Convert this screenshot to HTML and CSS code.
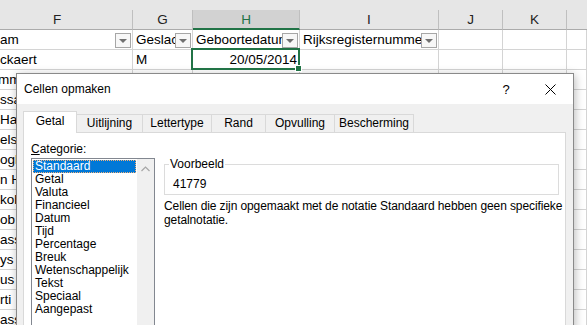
FILE: index.html
```html
<!DOCTYPE html>
<html lang="nl">
<head>
<meta charset="utf-8">
<title>Cellen opmaken</title>
<link rel="stylesheet" href="styles.css">
</head>
<body>
<div class="sheet">
  <div class="topstrip"></div>
  <div class="grid header">
    <div class="hc">F</div>
    <div class="hc">G</div>
    <div class="hc hc-sel">H</div>
    <div class="hc">I</div>
    <div class="hc">J</div>
    <div class="hc">K</div>
    <div class="hc hc-last"></div>
  </div>
  <div class="grid row">
    <div class="c c-first c-filter"><span class="ct">am</span><span class="fb"></span></div>
    <div class="c c-filter"><span class="ct">Geslacht</span><span class="fb"></span></div>
    <div class="c c-filter"><span class="ct">Geboortedatum</span><span class="fb"></span></div>
    <div class="c c-filter"><span class="ct">Rijksregisternummer</span><span class="fb"></span></div>
    <div class="c"></div><div class="c"></div><div class="c"></div>
  </div>
  <div class="grid row">
    <div class="c c-first">ckaert</div>
    <div class="c">M</div>
    <div class="c c-num c-active">20/05/2014<span class="handle"></span></div>
    <div class="c"></div><div class="c"></div><div class="c"></div><div class="c"></div>
  </div>
  <div class="grid row"><div class="c c-first c-cut">mm</div><div class="c"></div><div class="c"></div><div class="c"></div><div class="c"></div><div class="c"></div><div class="c"></div></div>
  <div class="grid row"><div class="c c-first">ssa</div><div class="c"></div><div class="c"></div><div class="c"></div><div class="c"></div><div class="c"></div><div class="c"></div></div>
  <div class="grid row"><div class="c c-first">Har</div><div class="c"></div><div class="c"></div><div class="c"></div><div class="c"></div><div class="c"></div><div class="c"></div></div>
  <div class="grid row"><div class="c c-first">els</div><div class="c"></div><div class="c"></div><div class="c"></div><div class="c"></div><div class="c"></div><div class="c"></div></div>
  <div class="grid row"><div class="c c-first">ogl</div><div class="c"></div><div class="c"></div><div class="c"></div><div class="c"></div><div class="c"></div><div class="c"></div></div>
  <div class="grid row"><div class="c c-first">n H</div><div class="c"></div><div class="c"></div><div class="c"></div><div class="c"></div><div class="c"></div><div class="c"></div></div>
  <div class="grid row"><div class="c c-first">kob</div><div class="c"></div><div class="c"></div><div class="c"></div><div class="c"></div><div class="c"></div><div class="c"></div></div>
  <div class="grid row"><div class="c c-first">ob</div><div class="c"></div><div class="c"></div><div class="c"></div><div class="c"></div><div class="c"></div><div class="c"></div></div>
  <div class="grid row"><div class="c c-first">ass</div><div class="c"></div><div class="c"></div><div class="c"></div><div class="c"></div><div class="c"></div><div class="c"></div></div>
  <div class="grid row"><div class="c c-first">ys</div><div class="c"></div><div class="c"></div><div class="c"></div><div class="c"></div><div class="c"></div><div class="c"></div></div>
  <div class="grid row"><div class="c c-first">us</div><div class="c"></div><div class="c"></div><div class="c"></div><div class="c"></div><div class="c"></div><div class="c"></div></div>
  <div class="grid row"><div class="c c-first">rti</div><div class="c"></div><div class="c"></div><div class="c"></div><div class="c"></div><div class="c"></div><div class="c"></div></div>
  <div class="grid row"><div class="c c-first">ass</div><div class="c"></div><div class="c"></div><div class="c"></div><div class="c"></div><div class="c"></div><div class="c"></div></div>
</div>

<div class="dialog">
  <div class="titlebar">
    <span class="title">Cellen opmaken</span>
    <span class="tbtn tbtn-help">?</span>
    <span class="tbtn tbtn-close">
      <svg width="11" height="11" viewBox="0 0 11 11"><path d="M0.5 0.5 L10.5 10.5 M10.5 0.5 L0.5 10.5" stroke="#000" stroke-width="1" fill="none"/></svg>
    </span>
  </div>
  <div class="dbody">
    <div class="tabs">
      <div class="tab tab-active">Getal</div>
      <div class="tab">Uitlijning</div>
      <div class="tab">Lettertype</div>
      <div class="tab">Rand</div>
      <div class="tab">Opvulling</div>
      <div class="tab tab-last">Bescherming</div>
    </div>
    <div class="panel">
      <div class="leftcol">
        <div class="lbl"><u>C</u>ategorie:</div>
        <div class="listbox">
          <div class="items">
            <div class="item item-sel">Standaard</div>
            <div class="item">Getal</div>
            <div class="item">Valuta</div>
            <div class="item">Financieel</div>
            <div class="item">Datum</div>
            <div class="item">Tijd</div>
            <div class="item">Percentage</div>
            <div class="item">Breuk</div>
            <div class="item">Wetenschappelijk</div>
            <div class="item">Tekst</div>
            <div class="item">Speciaal</div>
            <div class="item">Aangepast</div>
          </div>
          <div class="vscroll">
            <svg width="9" height="6" viewBox="0 0 9 6"><path d="M0.5 5 L4.5 1 L8.5 5" stroke="#a6a6a6" stroke-width="1.2" fill="none"/></svg>
          </div>
        </div>
      </div>
      <div class="rightcol">
        <fieldset class="group">
          <legend>Voorbeeld</legend>
          <div class="sample">41779</div>
        </fieldset>
        <p class="desc">Cellen die zijn opgemaakt met de notatie Standaard hebben geen specifieke getalnotatie.</p>
      </div>
    </div>
  </div>
</div>
</body>
</html>
```

FILE: styles.css
```css
html, body {
  margin: 0;
  padding: 0;
}
body {
  width: 587px;
  height: 325px;
  overflow: hidden;
  position: relative;
  background: #fff;
}

/* ---------- spreadsheet ---------- */
.sheet {
  font-family: "Liberation Sans", Arial, sans-serif;
  font-size: 13.5px;
  color: #000;
}
.topstrip {
  height: 10px;
  background: #e6e6e6;
}
.grid {
  display: grid;
  grid-template-columns: 151px 60px 107px 139px 64px 64px 1fr;
  margin-left: -18px;
  width: 605px;
}
.header {
  height: 20px;
  background: #e6e6e6;
}
.hc {
  box-sizing: border-box;
  height: 20px;
  border-right: 1px solid #bfbfbf;
  border-bottom: 1px solid #ababab;
  text-align: center;
  line-height: 19px;
  color: #222;
  font-size: 13.5px;
}
.hc-sel {
  background: #d2d2d2;
  color: #217346;
  border-bottom: 2px solid #217346;
}
.hc-last { border-right: none; }

.row { height: 20px; }
.c {
  box-sizing: border-box;
  height: 20px;
  border-right: 1px solid #d4d4d4;
  border-bottom: 1px solid #d4d4d4;
  padding: 0 3px;
  line-height: 20px;
  white-space: nowrap;
  overflow: hidden;
  position: relative;
}
.c-first { padding-left: 18px; }
.c-cut { padding-left: 16px; }
.c-filter {
  display: flex;
  align-items: flex-start;
  padding-right: 1px;
}
.ct {
  flex: 1;
  overflow: hidden;
  white-space: nowrap;
  min-width: 0;
}
.fb {
  flex: none;
  box-sizing: border-box;
  width: 16px;
  height: 15px;
  margin-top: 3px;
  border: 1px solid #a6a6a6;
  background: #f7f7f7;
  position: relative;
}
.fb::after {
  content: "";
  position: absolute;
  left: 3px;
  top: 5px;
  border-left: 4px solid transparent;
  border-right: 4px solid transparent;
  border-top: 4px solid #707070;
}
.c-num { text-align: right; padding-right: 2px; }
.c-active {
  overflow: visible;
  z-index: 1;
}
.c-active::before {
  content: "";
  position: absolute;
  left: -2px;
  top: -2px;
  right: -1px;
  bottom: -1px;
  border: 2px solid #217346;
  pointer-events: none;
}
.handle {
  position: absolute;
  right: -3px;
  bottom: -3px;
  width: 5px;
  height: 5px;
  background: #217346;
  border: 1px solid #fff;
}

/* ---------- dialog ---------- */
.dialog {
  position: absolute;
  left: 16px;
  top: 73px;
  width: 558px;
  height: 300px;
  box-sizing: border-box;
  border: 1px solid #8a8a8a;
  background: #f0f0f0;
  box-shadow: 1px 2px 9px rgba(0, 0, 0, 0.28);
  font-family: "Liberation Sans", Arial, sans-serif;
  font-size: 12px;
  color: #000;
}
.titlebar {
  height: 30px;
  background: #fff;
  display: flex;
  align-items: center;
  padding-left: 7px;
}
.title {
  flex: 1;
  font-size: 12px;
}
.tbtn {
  width: 46px;
  height: 30px;
  display: flex;
  align-items: center;
  justify-content: center;
}
.tbtn-help {
  font-size: 13px;
  padding-left: 4px;
  box-sizing: border-box;
}
.dbody {
  padding: 7px 7px 0 6px;
}
.tabs {
  display: grid;
  grid-template-columns: 54px 65px 69px 54px 69px 80px;
  align-items: end;
  height: 21px;
  position: relative;
  z-index: 1;
}
.tab {
  box-sizing: border-box;
  height: 18px;
  border-top: 1px solid #d9d9d9;
  border-left: 1px solid #d9d9d9;
  background: #f0f0f0;
  text-align: center;
  line-height: 17px;
  white-space: nowrap;
}
.tab-last { border-right: 1px solid #d9d9d9; }
.tab-active {
  height: 22px;
  margin-bottom: -1px;
  background: #fff;
  border-right: 1px solid #d9d9d9;
  line-height: 19px;
}
.tab-active + .tab { border-left: none; }
.panel {
  box-sizing: border-box;
  width: 543px;
  height: 240px;
  background: #fff;
  border: 1px solid #d9d9d9;
  display: flex;
  gap: 9px;
  padding: 9px 6px 0 7px;
}
.leftcol {
  width: 124px;
  flex: none;
}
.lbl {
  line-height: 14px;
  height: 14px;
}
.listbox {
  margin-top: 2px;
  box-sizing: border-box;
  width: 124px;
  height: 180px;
  border: 1px solid #828790;
  background: #fff;
  display: flex;
}
.items {
  flex: 1;
  padding: 1px 1px 0 1px;
}
.item {
  height: 13px;
  line-height: 13px;
  padding-left: 2px;
  white-space: nowrap;
}
.item-sel {
  background: #0078d7;
  color: #fff;
  outline: 1px dotted #f2b27a;
  outline-offset: -1px;
}
.vscroll {
  width: 17px;
  background: #f0f0f0;
  display: flex;
  justify-content: center;
  padding-top: 7px;
  box-sizing: border-box;
}
.rightcol {
  flex: 1;
  min-width: 0;
  margin-top: 15px;
}
.group {
  margin: 0;
  border: 1px solid #dcdcdc;
  padding: 0 4px 3px 4px;
  min-width: 0;
}
.group legend {
  padding: 0 1px;
  line-height: 14px;
}
.sample {
  margin-top: 6px;
  line-height: 14px;
  padding-left: 4px;
}
.desc {
  margin: 4px 0 0 0;
  line-height: 14px;
  width: 404px;
  letter-spacing: -0.1px;
}
```
